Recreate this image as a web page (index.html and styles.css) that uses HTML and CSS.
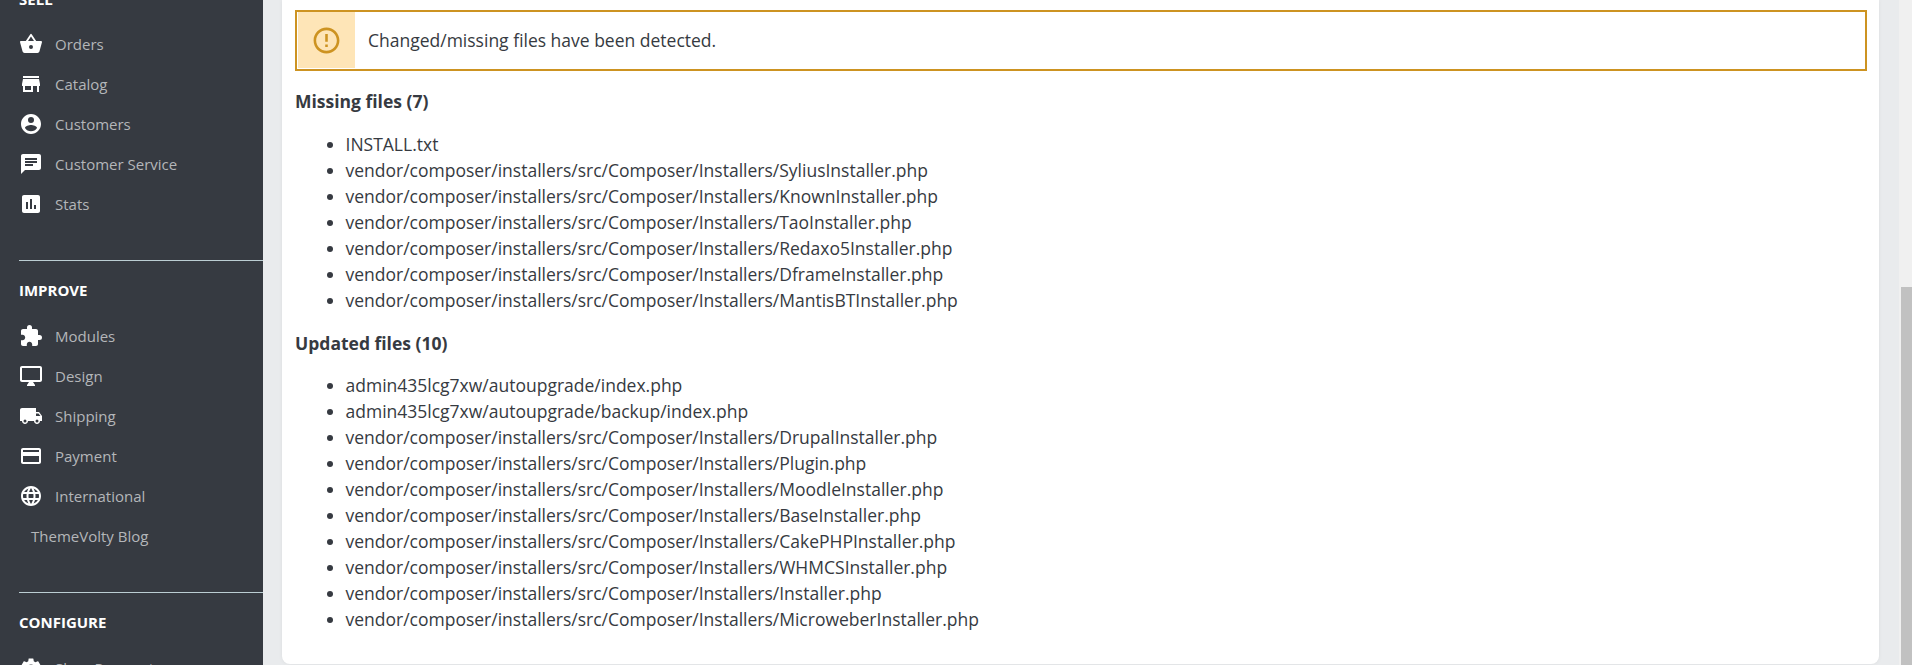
FILE: index.html
```html
<!DOCTYPE html>
<html lang="en">
<head>
  <meta charset="UTF-8">
  <title>Upgrade</title>
  <link rel="stylesheet" href="styles.css">
</head>
<body>
  <nav class="sidebar">
    <div class="section-title section-title-first">SELL</div>
    <ul class="menu">
      <li>
        <svg class="icon" viewBox="0 0 24 24"><path d="M17.21 9l-4.38-6.56a1 1 0 0 0-1.66 0L6.79 9H2a1 1 0 0 0-.96 1.27l2.54 9.27A2 2 0 0 0 5.5 21h13a2 2 0 0 0 1.93-1.46l2.54-9.27L23 10a1 1 0 0 0-1-1h-4.79zM9 9l3-4.4L15 9H9zm3 8a2 2 0 1 1 0-4 2 2 0 0 1 0 4z"/></svg>
        Orders
      </li>
      <li>
        <svg class="icon" viewBox="0 0 24 24"><path d="M20 4H4v2h16V4zm1 10v-2l-1-5H4l-1 5v2h1v6h10v-6h4v6h2v-6h1zm-9 4H6v-4h6v4z"/></svg>
        Catalog
      </li>
      <li>
        <svg class="icon" viewBox="0 0 24 24"><path d="M12 2C6.48 2 2 6.48 2 12s4.48 10 10 10 10-4.480 10-10S17.520 2 12 2zm0 3a3 3 0 1 1 0 6 3 3 0 0 1 0-6zm0 14.200a7.200 7.200 0 0 1-6-3.220c.030-1.990 4-3.080 6-3.080s5.970 1.090 6 3.080a7.200 7.200 0 0 1-6 3.220z"/></svg>
        Customers
      </li>
      <li>
        <svg class="icon" viewBox="0 0 24 24"><path d="M20 2H4c-1.100 0-1.990.9-1.990 2L2 22l4-4h14c1.100 0 2-.9 2-2V4c0-1.100-.9-2-2-2zM6 9h12v2H6V9zm8 5H6v-2h8v2zm4-6H6V6h12v2z"/></svg>
        Customer Service
      </li>
      <li>
        <svg class="icon" viewBox="0 0 24 24"><path d="M19 3H5c-1.100 0-2 .9-2 2v14c0 1.100.9 2 2 2h14c1.100 0 2-.9 2-2V5c0-1.100-.9-2-2-2zM9 17H7v-7h2v7zm4 0h-2V7h2v10zm4 0h-2v-4h2v4z"/></svg>
        Stats
      </li>
    </ul>
    <hr class="divider">
    <div class="section-title">IMPROVE</div>
    <ul class="menu">
      <li>
        <svg class="icon" viewBox="0 0 24 24"><path d="M20.500 11H19V7c0-1.100-.9-2-2-2h-4V3.500a2.500 2.500 0 0 0-5 0V5H4c-1.100 0-1.990.9-1.990 2v3.800H3.500c1.490 0 2.700 1.210 2.700 2.700s-1.210 2.700-2.700 2.700H2V20c0 1.100.9 2 2 2h3.800v-1.500c0-1.490 1.210-2.700 2.700-2.700s2.700 1.210 2.700 2.700V22H17c1.100 0 2-.9 2-2v-4h1.500a2.500 2.500 0 0 0 0-5z"/></svg>
        Modules
      </li>
      <li>
        <svg class="icon" viewBox="0 0 24 24"><path d="M21 2H3c-1.100 0-2 .9-2 2v12c0 1.100.9 2 2 2h7l-2 3v1h8v-1l-2-3h7c1.100 0 2-.9 2-2V4c0-1.100-.9-2-2-2zm0 14H3V4h18v12z"/></svg>
        Design
      </li>
      <li>
        <svg class="icon" viewBox="0 0 24 24"><path d="M20 8h-3V4H3c-1.100 0-2 .9-2 2v11h2c0 1.660 1.340 3 3 3s3-1.340 3-3h6c0 1.660 1.340 3 3 3s3-1.340 3-3h2v-5l-3-4zM6 18.500a1.500 1.500 0 1 1 0-3 1.500 1.500 0 0 1 0 3zm13.500-9l1.960 2.500H17V9.500h2.500zM18 18.500a1.500 1.500 0 1 1 0-3 1.500 1.500 0 0 1 0 3z"/></svg>
        Shipping
      </li>
      <li>
        <svg class="icon" viewBox="0 0 24 24"><path d="M20 4H4c-1.110 0-1.990.89-1.990 2L2 18c0 1.110.89 2 2 2h16c1.110 0 2-.89 2-2V6c0-1.110-.89-2-2-2zm0 14H4v-6h16v6zm0-10H4V6h16v2z"/></svg>
        Payment
      </li>
      <li>
        <svg class="icon" viewBox="0 0 24 24"><path d="M11.990 2C6.470 2 2 6.480 2 12s4.470 10 9.990 10C17.520 22 22 17.520 22 12S17.520 2 11.990 2zm6.930 6h-2.950a15.650 15.650 0 0 0-1.380-3.560A8.030 8.030 0 0 1 18.920 8zM12 4.040c.83 1.200 1.480 2.530 1.910 3.960h-3.820c.43-1.430 1.080-2.760 1.910-3.960zM4.260 14C4.100 13.360 4 12.690 4 12s.1-1.360.26-2h3.380c-.08.66-.14 1.320-.14 2s.06 1.340.14 2H4.260zm.82 2h2.950c.32 1.250.78 2.450 1.380 3.560A7.987 7.987 0 0 1 5.080 16zm2.950-8H5.080a7.987 7.987 0 0 1 4.330-3.560A15.650 15.650 0 0 0 8.030 8zM12 19.960c-.83-1.200-1.480-2.530-1.910-3.960h3.820c-.43 1.430-1.080 2.760-1.910 3.960zM14.340 14H9.660c-.09-.66-.16-1.320-.16-2s.07-1.350.16-2h4.680c.09.65.16 1.320.16 2s-.07 1.340-.16 2zm.25 5.560c.6-1.110 1.060-2.310 1.380-3.560h2.950a8.030 8.030 0 0 1-4.330 3.560zM16.360 14c.08-.66.14-1.320.14-2s-.06-1.340-.14-2h3.380c.16.64.26 1.310.26 2s-.1 1.360-.26 2h-3.380z"/></svg>
        International
      </li>
      <li class="no-icon">ThemeVolty Blog</li>
    </ul>
    <hr class="divider">
    <div class="section-title">CONFIGURE</div>
    <ul class="menu">
      <li>
        <svg class="icon" viewBox="0 0 24 24"><path d="M19.140 12.940c.04-.3.060-.61.060-.94 0-.32-.02-.64-.07-.94l2.030-1.580a.49.49 0 0 0 .12-.61l-1.920-3.320a.488.488 0 0 0-.59-.22l-2.390.96c-.5-.38-1.030-.7-1.620-.94l-.36-2.540a.484.484 0 0 0-.48-.41h-3.840c-.24 0-.43.170-.47.410l-.36 2.540c-.59.24-1.130.57-1.620.94l-2.390-.96c-.22-.080-.47 0-.59.220L2.740 8.870c-.12.210-.08.470.12.610l2.030 1.580c-.05.3-.09.630-.09.940s.02.640.070.940l-2.030 1.580a.49.49 0 0 0-.12.610l1.920 3.320c.12.220.37.290.59.220l2.390-.96c.5.380 1.030.7 1.620.94l.36 2.540c.05.240.24.410.48.410h3.840c.24 0 .44-.170.47-.410l.36-2.540c.59-.24 1.130-.56 1.620-.94l2.390.96c.22.080.47 0 .59-.22l1.920-3.320c.12-.22.070-.47-.12-.61l-2.010-1.580zM12 15.600a3.600 3.600 0 1 1 0-7.200 3.600 3.600 0 0 1 0 7.200z"/></svg>
        Shop Parameters
      </li>
    </ul>
  </nav>

  <main class="content">
    <div class="card">
      <div class="alert">
        <div class="alert-icon">
          <svg viewBox="0 0 24 24"><path d="M11 15h2v2h-2zm0-8h2v6h-2zm.99-5C6.470 2 2 6.480 2 12s4.470 10 9.990 10C17.520 22 22 17.520 22 12S17.520 2 11.990 2zM12 20c-4.420 0-8-3.580-8-8s3.580-8 8-8 8 3.580 8 8-3.580 8-8 8z"/></svg>
        </div>
        <p class="alert-text">Changed/missing files have been detected.</p>
      </div>

      <h4 class="files-title">Missing files (7)</h4>
      <ul class="files">
        <li>INSTALL.txt</li>
        <li>vendor/composer/installers/src/Composer/Installers/SyliusInstaller.php</li>
        <li>vendor/composer/installers/src/Composer/Installers/KnownInstaller.php</li>
        <li>vendor/composer/installers/src/Composer/Installers/TaoInstaller.php</li>
        <li>vendor/composer/installers/src/Composer/Installers/Redaxo5Installer.php</li>
        <li>vendor/composer/installers/src/Composer/Installers/DframeInstaller.php</li>
        <li>vendor/composer/installers/src/Composer/Installers/MantisBTInstaller.php</li>
      </ul>

      <h4 class="files-title">Updated files (10)</h4>
      <ul class="files">
        <li>admin435lcg7xw/autoupgrade/index.php</li>
        <li>admin435lcg7xw/autoupgrade/backup/index.php</li>
        <li>vendor/composer/installers/src/Composer/Installers/DrupalInstaller.php</li>
        <li>vendor/composer/installers/src/Composer/Installers/Plugin.php</li>
        <li>vendor/composer/installers/src/Composer/Installers/MoodleInstaller.php</li>
        <li>vendor/composer/installers/src/Composer/Installers/BaseInstaller.php</li>
        <li>vendor/composer/installers/src/Composer/Installers/CakePHPInstaller.php</li>
        <li>vendor/composer/installers/src/Composer/Installers/WHMCSInstaller.php</li>
        <li>vendor/composer/installers/src/Composer/Installers/Installer.php</li>
        <li>vendor/composer/installers/src/Composer/Installers/MicroweberInstaller.php</li>
      </ul>
    </div>
  </main>

  <div class="scrollbar"><div class="scrollbar-thumb"></div></div>
</body>
</html>
```

FILE: styles.css
```css
html, body {
  height: 100%;
}

body {
  margin: 0;
  display: flex;
  height: 665px;
  overflow: hidden;
  background-color: #e9ebed;
  color: #363a41;
  font-family: "Open Sans", sans-serif;
  font-size: 17.5px;
}

/* sidebar */
.sidebar {
  width: 263px;
  flex-shrink: 0;
  height: 665px;
  overflow: hidden;
  background-color: #363a41;
  padding-left: 19px;
  box-sizing: border-box;
}

.section-title {
  color: #fff;
  font-size: 15px;
  font-weight: 700;
  line-height: 19px;
  margin-top: 20px;
  margin-bottom: 16px;
}

.section-title-first {
  margin-top: -10px;
  margin-bottom: 15px;
}

.menu {
  list-style: none;
  margin: 0;
  padding: 0;
}

.menu li {
  display: flex;
  align-items: center;
  gap: 12px;
  height: 40px;
  color: #b4b6b9;
  font-size: 15px;
}

.menu li.no-icon {
  padding-left: 12px;
}

.icon {
  width: 24px;
  height: 24px;
  flex-shrink: 0;
  fill: #fff;
}

.divider {
  border: 0;
  height: 1px;
  margin: 36px 0 0;
  background-color: #bbcdd2;
}

/* main card */
.content {
  flex: 1;
  min-width: 0;
  padding-left: 19px;
  padding-right: 20px;
}

.card {
  height: 664px;
  box-sizing: border-box;
  background-color: #fff;
  border-radius: 0 0 8px 8px;
  box-shadow: 0 0 4px 0 rgba(0, 0, 0, 0.06);
  padding: 10px 12px 0 13px;
}

.alert {
  display: flex;
  align-items: stretch;
  height: 61px;
  box-sizing: border-box;
  border: 2px solid #cd9321;
}

.alert-icon {
  width: 57px;
  margin: 0 0 1px 1px;
  display: flex;
  align-items: center;
  justify-content: center;
  background-color: #fee5b7;
}

.alert-icon svg {
  width: 31px;
  height: 31px;
  fill: #cd9321;
}

.alert-text {
  margin: 0 0 1px 13px;
  align-self: center;
}

.files-title {
  margin: 19px 0 19px;
  font-size: 17.5px;
  font-weight: 700;
  line-height: 22px;
}

.files + .files-title {
  margin-bottom: 18px;
}

.files {
  margin: 0 0 14px;
  padding-left: 50.5px;
  line-height: 26px;
}

/* page scrollbar */
.scrollbar {
  width: 13px;
  flex-shrink: 0;
  height: 665px;
  background-color: #f0f0f0;
  display: flex;
  flex-direction: column;
  justify-content: flex-end;
  align-items: flex-end;
}

.scrollbar-thumb {
  width: 11px;
  height: 378px;
  background-color: #c1c1c1;
}
```
